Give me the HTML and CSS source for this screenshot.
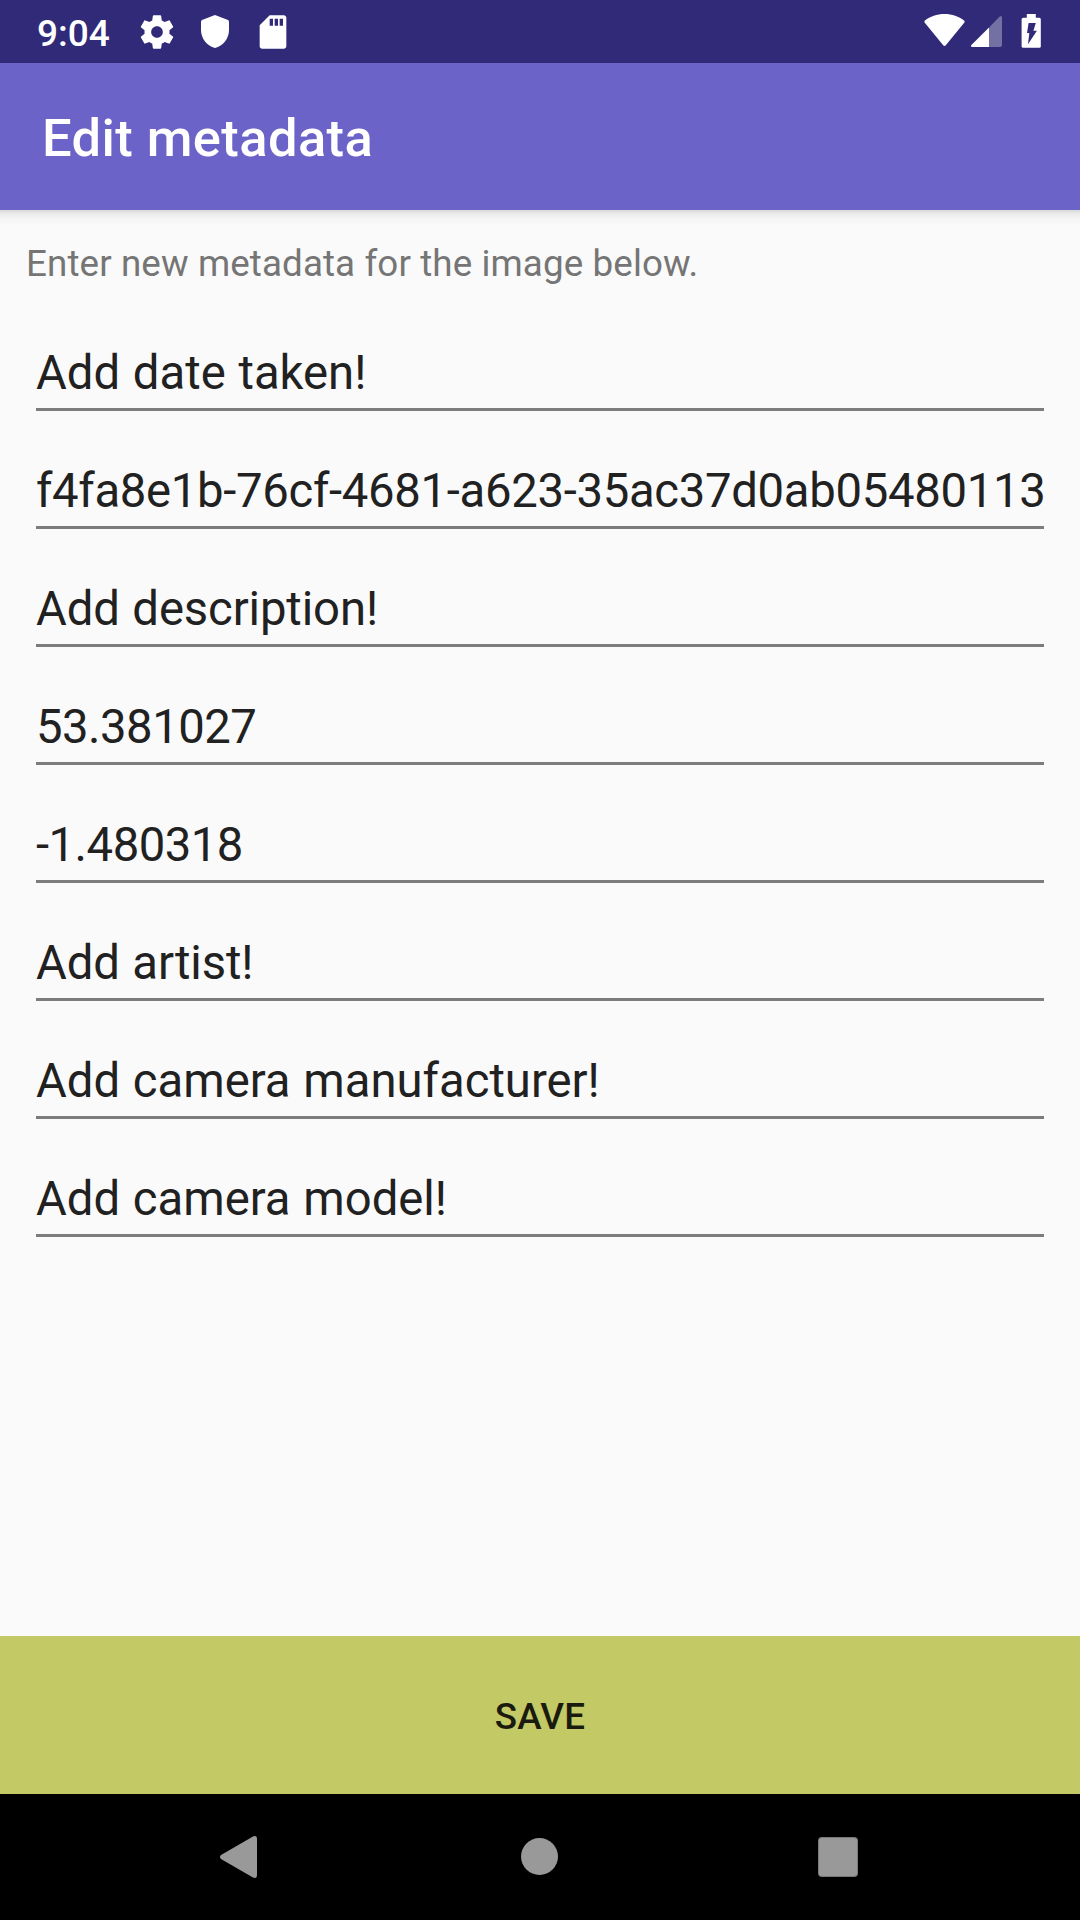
FILE: index.html
```html
<!DOCTYPE html>
<html lang="en">
<head>
<meta charset="utf-8">
<title>Edit metadata</title>
<link rel="stylesheet" href="styles.css">
</head>
<body>
<div class="screen">
  <div class="status-bar">
    <span class="clock">9:04</span>
    <svg class="icon-gear" width="40" height="40" viewBox="0 0 24 24"><path fill="#fff" d="M19.43 12.98c.04-.32.07-.64.07-.98s-.03-.66-.07-.98l2.11-1.65c.19-.15.24-.42.12-.64l-2-3.46c-.12-.22-.39-.3-.61-.22l-2.49 1c-.52-.4-1.08-.73-1.69-.98l-.38-2.65C14.46 2.18 14.25 2 14 2h-4c-.25 0-.46.18-.49.42l-.38 2.65c-.61.25-1.17.59-1.69.98l-2.49-1c-.23-.09-.49 0-.61.22l-2 3.46c-.13.22-.07.49.12.64l2.11 1.65c-.04.32-.07.65-.07.98s.03.66.07.98l-2.11 1.65c-.19.15-.24.42-.12.64l2 3.46c.12.22.39.3.61.22l2.49-1c.52.4 1.08.73 1.69.98l.38 2.65c.03.24.24.42.49.42h4c.25 0 .46-.18.49-.42l.38-2.65c.61-.25 1.17-.59 1.69-.98l2.49 1c.23.09.49 0 .61-.22l2-3.46c.12-.22.07-.49-.12-.64l-2.11-1.65zM12 15.5c-1.93 0-3.5-1.57-3.5-3.5s1.57-3.5 3.5-3.5 3.5 1.57 3.5 3.5-1.57 3.5-3.5 3.5z"/></svg>
    <svg class="icon-shield" width="28" height="33" viewBox="0 0 28 33"><path fill="#fff" d="M14 0 27 5Q28 5.500 28 6.500V15C28 23.500 22 31 14 33 6 31 0 23.500 0 15V6.500Q0 5.500 1 5Z"/></svg>
    <svg class="icon-sd" width="40" height="40" viewBox="0 0 24 24"><path fill="#fff" d="M18.500 2H10L4 8v12.500c0 .8.700 1.500 1.500 1.500h13c.8 0 1.500-.7 1.500-1.500v-17c0-.8-.7-1.500-1.500-1.500zM12 8.200h-2V4h2zm3 0h-2V4h2zm3 0h-2V4h2z"/></svg>
    <svg class="icon-wifi" width="41" height="33" viewBox="0 0 41 33"><path fill="#fff" d="M20.500 0C28 0 35 2.500 40 6.500Q41.200 7.500 40.200 8.700L21.800 31.200Q20.500 32.800 19.200 31.200L.8 8.700Q-.2 7.500 1 6.500C6 2.500 13 0 20.500 0Z"/></svg>
    <svg class="icon-signal" width="32" height="32" viewBox="0 0 32 32"><path fill="#fff" fill-opacity=".33" d="M19 12.500 29.700 1.500Q32 0 32 2.500V30Q32 32 30 32H19Z"/><path fill="#fff" d="M19 12.500V32H2.300Q0 31.600 1.400 30Z"/></svg>
    <svg class="icon-battery" width="20" height="34" viewBox="0 0 20 34"><path fill="#fff" fill-rule="evenodd" d="M5.800 0h9v3.700H18.300q1.500 0 1.500 1.500V32.500q0 1.300-1.500 1.300H2.300Q.6 33.800.6 32.500V5.200Q.6 3.700 2.300 3.700H5.800ZM7.600 9h7.200l-2.400 7.800h3.500L7 30.200 8.300 19H6Z"/></svg>
  </div>
  <header class="app-bar"><h1 class="title">Edit metadata</h1></header>
  <main class="content">
    <p class="hint">Enter new metadata for the image below.</p>
    <div class="fields">
      <div class="field">Add date taken!</div>
      <div class="field field-id">f4fa8e1b-76cf-4681-a623-35ac37d0ab05480113</div>
      <div class="field field-description">Add description!</div>
      <div class="field field-number">53.381027</div>
      <div class="field field-number">-1.480318</div>
      <div class="field field-description">Add artist!</div>
      <div class="field">Add camera manufacturer!</div>
      <div class="field">Add camera model!</div>
    </div>
  </main>
  <button class="save" type="button">SAVE</button>
  <nav class="nav-bar">
    <svg class="nav-back" width="38" height="42" viewBox="0 0 38 42"><path fill="#999" d="M1 19 33 .4Q37 -1 37 3V39Q37 43 33 41.600L1 23Q-1 21 1 19Z"/></svg>
    <svg class="nav-home" width="37" height="37" viewBox="0 0 37 37"><circle cx="18.500" cy="18.500" r="18.500" fill="#999"/></svg>
    <svg class="nav-recent" width="40" height="40" viewBox="0 0 40 40"><rect width="40" height="40" rx="4" fill="#797979"/><rect x="1" y="1" width="38" height="38" rx="3" fill="#999"/></svg>
  </nav>
</div>
</body>
</html>
```

FILE: styles.css
```css
* { box-sizing: border-box; }
body { margin: 0; font-family: Roboto, sans-serif; }
.screen {
  display: flex;
  flex-direction: column;
  width: 1080px;
  height: 1920px;
  overflow: hidden;
  background: #fafafa;
}
svg { display: block; flex: none; }

.status-bar {
  display: flex;
  align-items: flex-start;
  height: 63px;
  flex: none;
  padding-left: 37px;
  background: #302a78;
  color: #fff;
}
.clock {
  width: 100px;
  padding-top: 12px;
  font-size: 37px;
  line-height: 44px;
  font-weight: 500;
}
.icon-gear { margin-top: 12px; }
.icon-shield { margin: 15px 0 0 24px; }
.icon-sd { margin: 12px 0 0 24px; }
.icon-wifi { margin: 14px 0 0 auto; }
.icon-signal { margin: 15px 0 0 5px; }
.icon-battery { margin: 14px 39px 0 19px; }

.app-bar {
  display: flex;
  align-items: center;
  flex: none;
  height: 147px;
  padding: 3px 0 0 42px;
  background: #6c63c8;
}
.title {
  margin: 0;
  font-size: 52.5px;
  line-height: 62px;
  font-weight: 500;
  letter-spacing: 0.4px;
  color: #fff;
}

.content {
  flex: 1;
  background: linear-gradient(#d9d9d9, #ebebeb 4px, #f5f5f5 9px, #fafafa 15px);
}
.hint {
  margin: 0;
  padding: 32px 26px 0;
  font-size: 36.75px;
  line-height: 44px;
  letter-spacing: 0.11px;
  color: #757575;
}
.fields {
  display: flex;
  flex-direction: column;
  padding: 7px 36px 0;
}
.field {
  height: 118px;
  padding-top: 52px;
  border-bottom: 3px solid #7c7c7c;
  font-size: 47.25px;
  line-height: 56px;
  word-spacing: 1px;
  white-space: nowrap;
  color: #212121;
}
.field-id { letter-spacing: -0.31px; }
.field-number { letter-spacing: -0.5px; }
.field-description { letter-spacing: -0.12px; }

.save {
  flex: none;
  height: 158px;
  padding: 3px 0 0;
  border: 0;
  background: #c3ca65;
  font: 500 36.75px/44px Roboto, sans-serif;
  letter-spacing: 0.2px;
  color: #1a1b0e;
}

.nav-bar {
  display: flex;
  align-items: center;
  flex: none;
  height: 126px;
  padding-left: 220px;
  background: #000;
}
.nav-home { margin: 0 0 1px 263px; }
.nav-recent { margin-left: 260px; }
```
